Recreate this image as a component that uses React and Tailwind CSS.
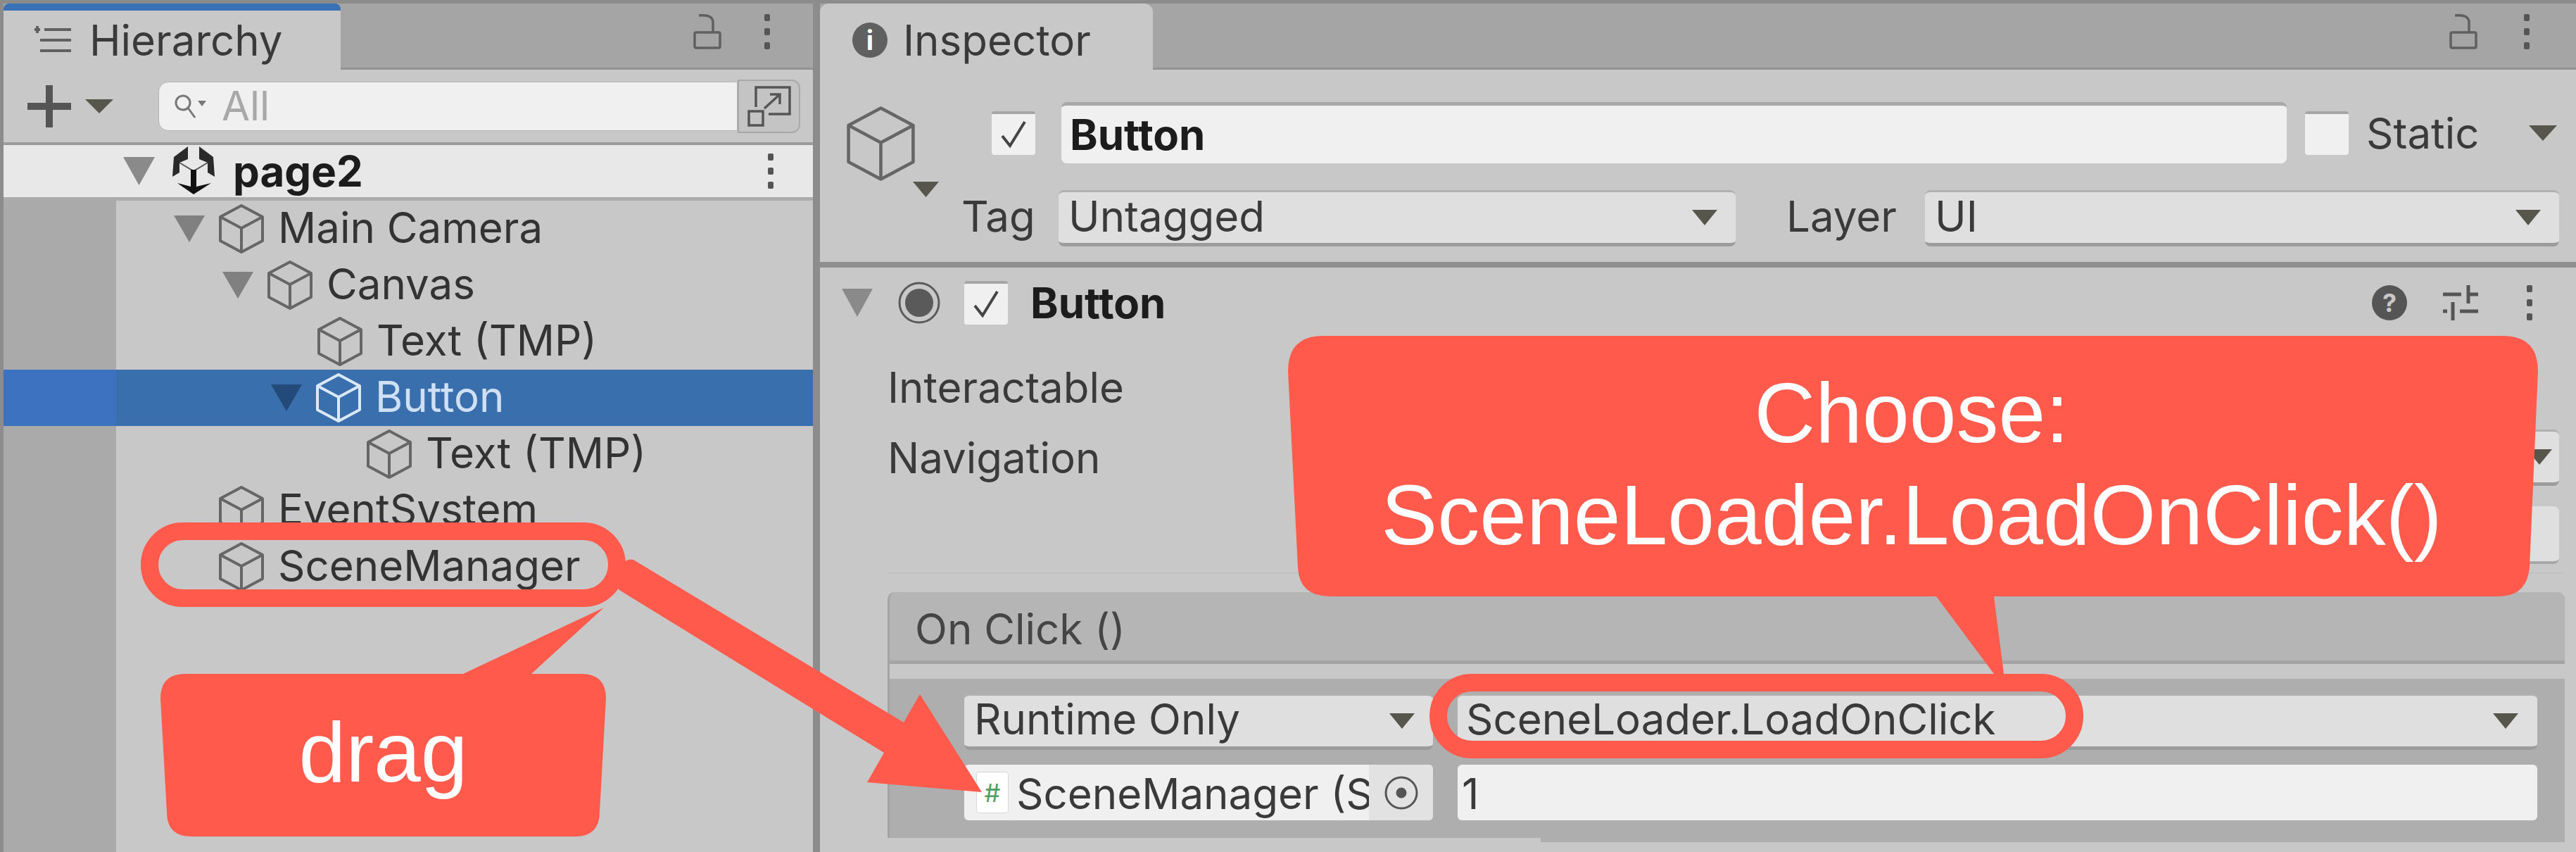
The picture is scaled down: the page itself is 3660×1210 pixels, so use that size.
const inter = "[font-family:Inter,'Liberation_Sans',sans-serif]";

function Cube({ className = 'w-[66px] h-[70px]', color = '#666666', width = 4 }) {
  return (
    <svg viewBox="0 0 66 70" className={`shrink-0 ${className}`} fill="none" stroke={color} strokeWidth={width} strokeLinejoin="round">
      <path d="M33 2 L63 18 V52 L33 68 L3 52 V18 Z" />
      <path d="M3 18 L33 34 L63 18 M33 34 V68" />
    </svg>
  );
}

function Tri({ className, fill = '#8a8a8a' }) {
  return (
    <svg viewBox="0 0 10 10" preserveAspectRatio="none" className={`shrink-0 ${className}`}>
      <polygon points="0,0 10,0 5,10" fill={fill} />
    </svg>
  );
}

function Kebab({ className = '' }) {
  return (
    <svg viewBox="0 0 10 50" className={`w-[10px] h-[50px] shrink-0 ${className}`} fill="#555555">
      <rect x="1" y="0" width="8" height="10" rx="2" />
      <rect x="1" y="20" width="8" height="10" rx="2" />
      <rect x="1" y="40" width="8" height="10" rx="2" />
    </svg>
  );
}

function Lock({ className = '' }) {
  return (
    <svg viewBox="0 0 40 50" className={`w-[40px] h-[50px] shrink-0 ${className}`} fill="none" stroke="#606060" strokeWidth="3.5">
      <rect x="2" y="26" width="36" height="22" rx="2" />
      <path d="M8 2 Q28 0 28 12 L28 26" />
    </svg>
  );
}

function HierarchyIcon() {
  return (
    <svg viewBox="0 0 52 40" className="w-[52px] h-[40px] shrink-0" stroke="#606060" strokeWidth="4">
      <path d="M4 0 V10 M0 5 H8 M14 5 H52 M14 20 H52 M14 35 H52 M14 20 H8 M14 35 H8" fill="none" />
    </svg>
  );
}

function UnityLogo() {
  return (
    <svg viewBox="0 0 60 70" className="w-[60px] h-[70px] shrink-0 mr-[26px]" fill="#111111">
      <path d="M22 0 L2 15 L0 43 L10 37 L10 23 L22 18 Z" fill="#2a2a2a" />
      <path d="M38 0 L58 15 L60 43 L50 37 L50 23 L38 18 Z" fill="#2a2a2a" />
      <path d="M10 23 L30 35 L50 23" fill="none" stroke="#555555" strokeWidth="2" />
      <rect x="26" y="33" width="8" height="32" />
      <path d="M7 52 L30 58 L55 52 L30 68 Z" />
    </svg>
  );
}

function CheckBox({ checked = true, className = '' }) {
  return (
    <div className={`w-[62px] h-[62px] shrink-0 bg-[#f0f0f0] rounded-[4px] border-t-[4px] border-[#a6a6a6] flex items-center justify-center ${className}`}>
      {checked && (
        <svg viewBox="0 0 40 44" className="w-[40px] h-[44px]" fill="none" stroke="#444444" strokeWidth="4">
          <path d="M4 24 L15 38 L36 4" />
        </svg>
      )}
    </div>
  );
}

function Dropdown({ children, className = '', textPad = 'pl-[14px]', textLift = 'pb-[4px]', triClass = 'mr-[26px]' }) {
  return (
    <div className={`h-[80px] shrink-0 bg-[#dfdfdf] rounded-[8px] border-t-[3px] border-t-[#b0b0b0] border-b-[5px] border-b-[#9c9c9c] flex items-center justify-between text-[60px] leading-none text-[#3a3a3a] ${textPad} ${className}`}>
      <span className={textLift}>{children}</span>
      <Tri className={`w-[36px] h-[22px] ${triClass}`} fill="#56564c" />
    </div>
  );
}

const treeRows = [
  { name: 'Main Camera', pad: 'pl-[82px]', open: true },
  { name: 'Canvas', pad: 'pl-[151px]', open: true },
  { name: 'Text (TMP)', pad: 'pl-[285px]' },
  { name: 'Button', pad: 'pl-[220px]', open: true, selected: true },
  { name: 'Text (TMP)', pad: 'pl-[355px]' },
  { name: 'EventSystem', pad: 'pl-[145px]' },
  { name: 'SceneManager', pad: 'pl-[145px]' },
];

function TreeRow({ row }) {
  return (
    <div className="flex h-[80px]">
      <div className={`w-[160px] shrink-0 ${row.selected ? 'bg-[#3d72c0]' : 'bg-[#aaaaaa]'}`} />
      <div className={`flex-1 flex items-center text-[60px] ${row.pad} ${row.selected ? 'bg-[#3a6fae] text-[#cfe0f5]' : 'text-[#333333]'}`}>
        {row.open && <Tri className="w-[44px] h-[38px] mr-[19px]" fill={row.selected ? '#234a78' : '#808080'} />}
        <Cube color={row.selected ? '#dbe8f7' : '#666666'} />
        <span className="ml-[19px] pb-[4px] whitespace-nowrap">{row.name}</span>
      </div>
    </div>
  );
}

function Hierarchy() {
  return (
    <div className="w-[1150px] h-full ml-[5px] shrink-0 flex flex-col bg-[#c8c8c8]">
      <div className="h-[94px] shrink-0 bg-[#a5a5a5] border-b-[3px] border-[#939393] flex items-start">
        <div className="w-[479px] h-[94px] bg-[#c8c8c8] rounded-t-[8px] border-t-[10px] border-[#3a72b8] flex items-center pl-[44px] gap-[26px] text-[60px] text-[#3a3a3a]">
          <HierarchyIcon />
          <span>Hierarchy</span>
        </div>
        <div className="flex-1 flex items-center justify-end h-[60px] mt-[10px]">
          <Lock className="mr-[60px]" />
          <Kebab className="mr-[60px]" />
        </div>
      </div>
      <div className="h-[107px] shrink-0 border-b-[4px] border-[#9a9a9a] flex items-center pl-[34px]">
        <svg viewBox="0 0 62 60" className="w-[62px] h-[60px] shrink-0" fill="#555555">
          <rect x="0" y="25" width="62" height="10" />
          <rect x="26" y="0" width="10" height="60" />
        </svg>
        <Tri className="w-[40px] h-[20px] ml-[20px]" fill="#56564c" />
        <div className="ml-[64px] w-[823px] h-[70px] bg-[#f0f0f0] rounded-l-[14px] flex items-center pl-[21px] border border-[#b4b4b4]">
          <svg viewBox="0 0 46 36" className="w-[46px] h-[36px] shrink-0" fill="none" stroke="#777777" strokeWidth="3">
            <circle cx="13" cy="13" r="10" />
            <path d="M20 20 L30 34" />
            <polygon points="34,10 46,10 40,18" fill="#777777" stroke="none" />
          </svg>
          <span className="ml-[22px] text-[58px] text-[#a8a8a8]">All</span>
        </div>
        <div className="w-[89px] h-[76px] bg-[#c4c4c4] rounded-r-[12px] border-2 border-[#a8a8a8] flex items-center justify-center">
          <svg viewBox="0 0 62 58" className="w-[62px] h-[58px]" fill="none" stroke="#555555" strokeWidth="3.5">
            <path d="M12 30 V2 H60 V40 H30" />
            <rect x="2" y="36" width="20" height="20" />
            <path d="M24 32 L46 12 M32 12 H46 V26" />
          </svg>
        </div>
      </div>
      <div className="h-[79px] shrink-0 bg-[#e8e8e8] border-b-[5px] border-[#ababab] flex items-center pl-[170px] text-[60px] font-bold text-[#1c1c1c]">
        <Tri className="w-[45px] h-[40px] mr-[25px]" />
        <UnityLogo />
        <span className="flex-1">page2</span>
        <Kebab className="mr-[55px]" />
      </div>
      {treeRows.map((row, i) => (
        <TreeRow key={i} row={row} />
      ))}
      <div className="flex flex-1">
        <div className="w-[160px] bg-[#aaaaaa]" />
      </div>
    </div>
  );
}

function Inspector() {
  return (
    <div className="flex-1 h-full ml-[10px] flex flex-col bg-[#c8c8c8] text-[60px] text-[#3a3a3a]">
      <div className="h-[94px] shrink-0 bg-[#a5a5a5] border-b-[3px] border-[#939393] flex items-start">
        <div className="w-[473px] h-[94px] bg-[#c8c8c8] rounded-t-[12px] flex items-center pl-[46px] gap-[22px] pt-[10px]">
          <div className="w-[50px] h-[50px] rounded-full bg-[#606060] text-white text-[38px] font-bold flex items-center justify-center">i</div>
          <span>Inspector</span>
        </div>
        <div className="flex-1 flex items-center justify-end h-[60px] mt-[10px]">
          <Lock className="mr-[65px]" />
          <Kebab className="mr-[65px]" />
        </div>
      </div>

      {/* object header */}
      <div className="h-[281px] shrink-0 flex border-b-[8px] border-[#8f8f8f]">
        <div className="w-[201px] shrink-0 pl-[36px] pt-[51px]">
          <Cube className="w-[101px] h-[108px]" width={3} />
          <Tri className="w-[37px] h-[22px] ml-[96px]" fill="#56564c" />
        </div>
        <div className="flex-1 flex flex-col pt-[46px]">
          <div className="flex items-center h-[87px]">
            <CheckBox className="ml-[43px]" />
            <div className="ml-[37px] w-[1741px] h-[87px] bg-[#f0f0f0] rounded-[8px] border-t-[5px] border-[#a8a8a8] flex items-center pl-[12px] font-bold text-[#1c1c1c]">Button</div>
            <CheckBox checked={false} className="ml-[26px]" />
            <span className="ml-[25px]">Static</span>
            <Tri className="w-[40px] h-[22px] ml-[70px]" fill="#56564c" />
          </div>
          <div className="flex items-center h-[80px] mt-[38px] leading-none">
            <span className="w-[138px] pb-[6px]">Tag</span>
            <Dropdown className="w-[962px]">Untagged</Dropdown>
            <span className="ml-[72px] w-[197px] pb-[6px]">Layer</span>
            <Dropdown className="w-[901px]">UI</Dropdown>
          </div>
        </div>
      </div>

      {/* component */}
      <div className="flex items-center h-[100px] shrink-0 pl-[31px]">
        <Tri className="w-[44px] h-[40px]" />
        <svg viewBox="0 0 60 60" className="w-[60px] h-[60px] ml-[36px] shrink-0" fill="#5a5a5a">
          <circle cx="30" cy="30" r="20" />
          <circle cx="30" cy="30" r="28" fill="none" stroke="#5a5a5a" strokeWidth="3" />
        </svg>
        <CheckBox className="ml-[34px]" />
        <span className="ml-[32px] font-bold text-[#1c1c1c] flex-1">Button</span>
        <div className="w-[50px] h-[50px] rounded-full bg-[#555555] text-[#c8c8c8] text-[36px] font-bold flex items-center justify-center">?</div>
        <svg viewBox="0 0 50 50" className="w-[50px] h-[50px] ml-[51px] shrink-0" fill="none" stroke="#555555" strokeWidth="5">
          <path d="M0 13 H26 M36 0 V26 M36 13 H50 M50 37 H24 M14 24 V50 M0 37 H6" />
        </svg>
        <Kebab className="ml-[68px] mr-[61px]" />
      </div>

      <div className="flex flex-col pl-[96px] pr-[16px]">
        <div className="h-[100px] flex items-center mt-[20px]">Interactable</div>
        <div className="h-[100px] flex items-center justify-between pr-[8px]">
          <span>Navigation</span>
          <Dropdown className="w-[1536px] border-t-[#aaaaaa]" triClass="mr-[10px]" />
        </div>
        <div className="h-[100px] flex justify-end items-center mt-[10px] pr-[8px]">
          <div className="w-[1536px] h-[82px] bg-[#dfdfdf] rounded-[8px] border-b-[4px] border-[#a8a8a8]" />
        </div>
        <div className="h-px bg-[#bcbcbc] mt-[3px]" />

        {/* event list */}
        <div className="mt-[27px] rounded-t-[10px] border-l-[3px] border-[#a4a4a4] bg-[#aeaeae]">
          <div className="h-[102px] bg-[#b5b5b5] rounded-t-[10px] border-b-[5px] border-[#a4a4a4] flex items-center pl-[36px] pt-[6px] text-[#454545]">On Click ()</div>
          <div className="h-[21px] bg-[#c8c8c8]" />
          <div className="h-[226px] flex flex-col gap-[21px] pt-[21px] pl-[106px] pr-[39px]">
            <div className="flex gap-[35px]">
              <Dropdown className="w-[666px]" textLift="pb-[6px]">Runtime Only</Dropdown>
              <Dropdown className="flex-1" textPad="pl-[12px]" textLift="pb-[6px]" triClass="mr-[27px]">SceneLoader.LoadOnClick</Dropdown>
            </div>
            <div className="flex gap-[35px]">
              <div className="w-[666px] h-[79px] bg-[#f0f0f0] rounded-[6px] flex items-center pl-[17px] overflow-hidden">
                <div className="w-[46px] h-[59px] shrink-0 bg-white border border-[#d8d8d8] rounded-[4px] flex items-center justify-center text-[36px] text-[#4f9f60]">#</div>
                <span className="ml-[11px] pt-[2px] w-[501px] overflow-hidden whitespace-nowrap">SceneManager (S</span>
                <div className="flex-1 h-full bg-[#e2e2e2] flex items-center justify-center">
                  <svg viewBox="0 0 50 50" className="w-[50px] h-[50px]" fill="none" stroke="#555555" strokeWidth="3">
                    <circle cx="25" cy="25" r="22" />
                    <circle cx="25" cy="25" r="6" fill="#555555" />
                  </svg>
                </div>
              </div>
              <div className="flex-1 h-[79px] bg-[#f0f0f0] rounded-[6px] flex items-center pl-[6px] pt-[2px]">1</div>
            </div>
          </div>
        </div>
        <div className="flex justify-end">
          <div className="w-[1455px] h-[6px] bg-[#aeaeae]" />
        </div>
      </div>
    </div>
  );
}

function Annotations() {
  const red = '#ff5a4c';
  return (
    <div className="absolute inset-0 pointer-events-none [font-family:'Liberation_Sans',Arial,sans-serif] text-white text-[120px] leading-none">
      <svg viewBox="0 0 3660 1210" className="absolute inset-0 w-full h-full">
        <rect x="212.5" y="754.5" width="664" height="95" rx="47.5" fill="none" stroke={red} strokeWidth="25" />
        <rect x="2043.5" y="969.5" width="904" height="95" rx="47.5" fill="none" stroke={red} strokeWidth="25" />
        <path d="M900 795 L1284 1026 L1307 986 L1395 1125 L1232 1111 L1256 1069 L880 838 Q868 826 880 808 Q888 792 900 795 Z" fill={red} />
        <path d="M263 957 L658 957 L858 863 L755 957 L826 957 Q861 957 861 992 L852 1153 Q852 1188 817 1188 L272 1188 Q237 1188 237 1153 L228 992 Q228 957 263 957 Z" fill={red} />
        <path d="M1880 477 L3556 477 Q3606 477 3606 527 L3594 806 Q3590 847 3550 847 L2833 847 L2847 957 L2833 957 L2751 847 L1890 847 Q1846 847 1844 806 L1830 527 Q1830 477 1880 477 Z" fill={red} />
      </svg>
      <div className="absolute left-[228px] w-[633px] top-[1008px] text-center">drag</div>
      <div className="absolute left-[1828px] w-[1776px] top-[514px] text-center leading-[145px] whitespace-nowrap">
        <div>Choose:</div>
        <div>SceneLoader.LoadOnClick()</div>
      </div>
    </div>
  );
}

export default function App() {
  return (
    <div className={`relative w-[3660px] h-[1210px] overflow-hidden bg-[#8c8c8c] pt-[5px] ${inter}`}>
      <div className="flex h-full">
        <Hierarchy />
        <Inspector />
      </div>
      <Annotations />
    </div>
  );
}
